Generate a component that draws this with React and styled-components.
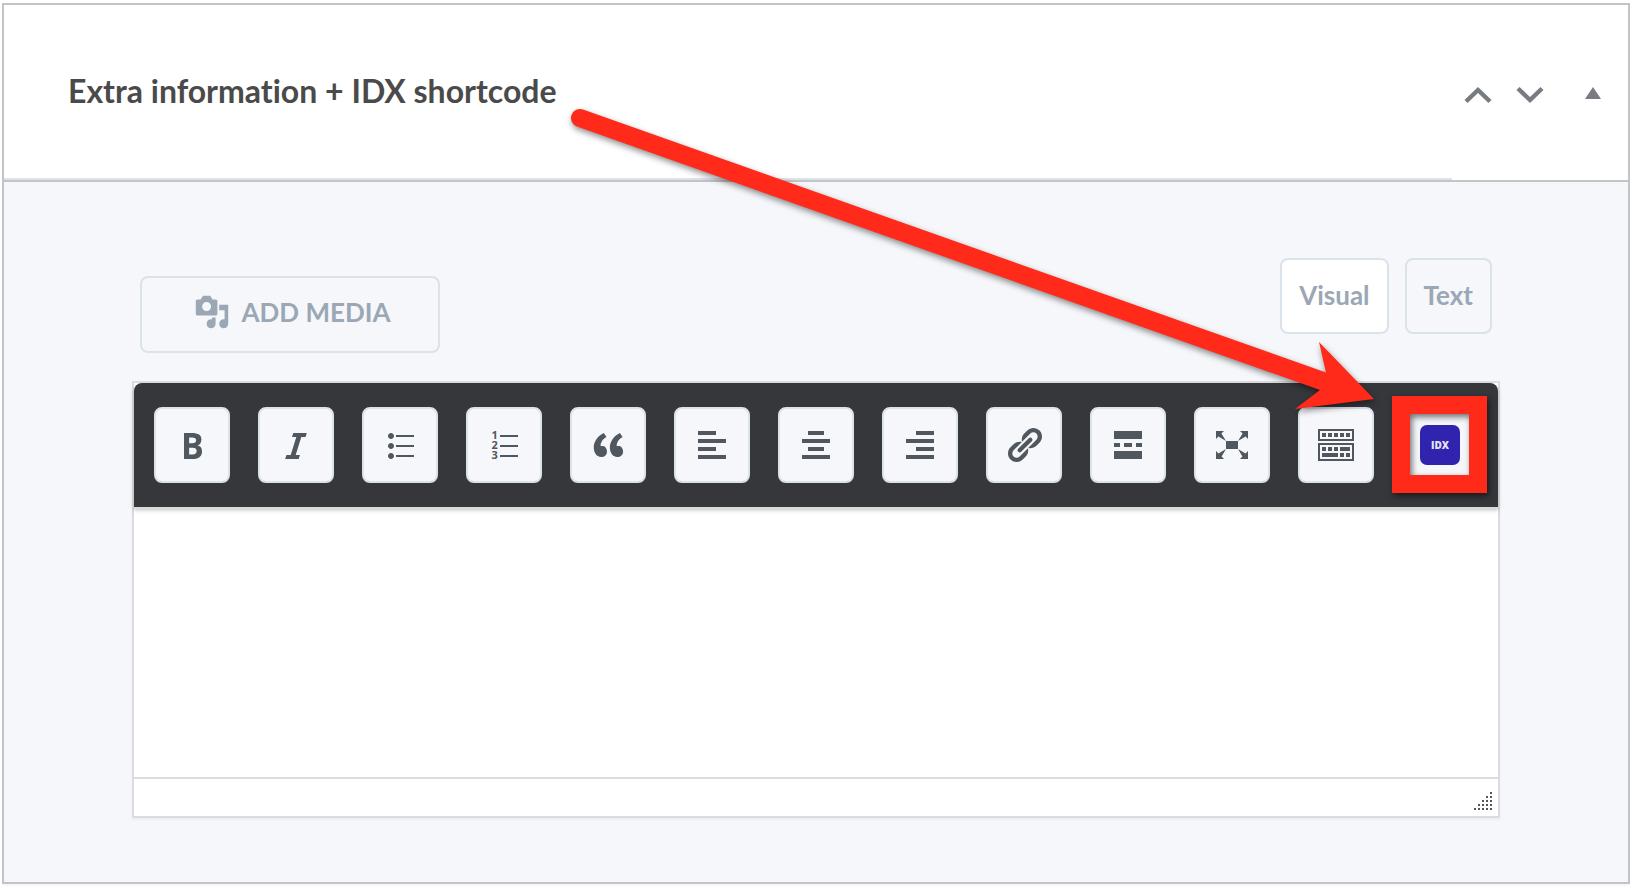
import React from "react";
import styled, { createGlobalStyle } from "styled-components";

const GlobalStyle = createGlobalStyle`
  * { box-sizing: border-box; }
  body {
    margin: 0;
    background: #fff;
    font-family: Lato, "Liberation Sans", sans-serif;
    font-variant-ligatures: none;
  }
  button, textarea { font: inherit; margin: 0; }
`;

const Page = styled.main`
  padding: 3px 2px 4px;
`;

const Panel = styled.section`
  position: relative;
  border: 2px solid #c3c4c7;
  background: #f5f7fb;
  box-shadow: 0 2px 2px rgba(0, 0, 0, 0.04);
`;

const Header = styled.header`
  display: flex;
  height: 177px;
  background: #fff;
  border-bottom: 2px solid #c3c4c7;
`;

const Title = styled.h2`
  flex: 1;
  margin: 0;
  padding: 66px 64px 0;
  border-bottom: 2px solid #dae2ea;
  font-size: 32px;
  line-height: 40px;
  font-weight: 700;
  color: #4a4a4a;
`;

const HeaderButton = styled.button`
  display: flex;
  align-items: center;
  justify-content: center;
  width: ${(p) => (p.$wide ? 72 : 52)}px;
  padding: 0;
  border: 0;
  background: none;
  color: #787c82;
`;

const Body = styled.div`
  padding: 76px 128px 64px;
`;

const Controls = styled.div`
  display: flex;
  justify-content: space-between;
  align-items: flex-start;
  padding: 0 8px;
  margin-bottom: 28px;
`;

const OutlineButton = styled.button`
  display: flex;
  align-items: center;
  justify-content: center;
  height: 76px;
  padding: 0 17px 2px;
  border: 2px solid #dae2ea;
  border-radius: 8px;
  background: ${(p) => (p.$active ? "#fff" : "#f5f7fb")};
  color: #9ba7b4;
  font-size: 26px;
  line-height: 32px;
  font-weight: 700;
`;

const MediaButton = styled(OutlineButton)`
  width: 300px;
  height: 77px;
  margin-top: 18px;
  padding: 0 16px 6px 20px;
  gap: 12px;
  text-transform: uppercase;
`;

const Tabs = styled.div`
  display: flex;
  gap: 16px;
`;

const Editor = styled.div`
  border: 2px solid #dcdcde;
  background: #fff;
  box-shadow: 0 2px 2px rgba(0, 0, 0, 0.04);
`;

const Toolbar = styled.div`
  position: relative;
  display: flex;
  flex-wrap: wrap;
  gap: 28px;
  padding: 24px 20px;
  border-radius: 8px 8px 0 0;
  background: #36373b;
  box-shadow: 0 2px 0 #d9d9d9, 0 3px 4px rgba(0, 0, 0, 0.25);
`;

const Tool = styled.button`
  position: relative;
  display: flex;
  align-items: center;
  justify-content: center;
  width: 76px;
  height: 76px;
  padding: 0;
  border: 2px solid #dae2ea;
  border-radius: 8px;
  background: #f5f7fb;
  color: #50575e;
`;

const IdxMark = styled.span`
  display: flex;
  align-items: center;
  justify-content: center;
  width: 40px;
  height: 40px;
  border-radius: 7px;
  background: #3023ae;
  color: #e4e2f5;
  font-family: "Open Sans", sans-serif;
  font-size: 10px;
  line-height: 12px;
  font-weight: 800;
`;

const Highlight = styled.span`
  position: absolute;
  top: -13px;
  left: -12px;
  width: 95px;
  height: 97px;
  border: 18px solid #ff2a1a;
  filter: drop-shadow(2px 3px 3px rgba(0, 0, 0, 0.55));
  pointer-events: none;
`;

const Content = styled.textarea`
  display: block;
  width: 100%;
  height: 270px;
  padding: 20px;
  border: 0;
  outline: 0;
  resize: none;
  background: transparent;
  font-size: 26px;
`;

const StatusBar = styled.div`
  display: flex;
  justify-content: flex-end;
  align-items: flex-end;
  height: 39px;
  padding: 0 6px 6px;
  border-top: 2px solid #dcdcde;
`;

const Arrow = styled.svg`
  position: absolute;
  top: 100px;
  right: 244px;
  pointer-events: none;
  overflow: visible;
  filter: drop-shadow(1px 3px 3px rgba(0, 0, 0, 0.45));
`;

const Icon = ({ d, size = 40, children }) => (
  <svg width={size} height={size} viewBox="0 0 20 20" fill="currentColor" aria-hidden="true">
    {d ? <path d={d} /> : children}
  </svg>
);

const mediaPath =
  "M13 11V4c0-.55-.45-1-1-1h-1.67L9 1H5L3.67 3H2c-.55 0-1 .45-1 1v7c0 .55.45 1 1 1h10c.55 0 1-.45 1-1zM7 4.5c1.38 0 2.5 1.12 2.5 2.5S8.38 9.5 7 9.5 4.5 8.38 4.5 7 5.62 4.5 7 4.5zM14 6h5v10.5c0 1.38-1.12 2.5-2.5 2.5S14 17.88 14 16.5s1.12-2.5 2.5-2.5c.17 0 .34.02.5.05V9h-3V6zm-4 8.05V13h2v3.5c0 1.38-1.12 2.5-2.5 2.5S7 17.88 7 16.5 8.12 14 9.5 14c.17 0 .34.02.5.05z";

const tools = [
  {
    label: "Bold",
    d: "M6 4v13h4.54c1.37 0 2.46-.33 3.26-1 .8-.66 1.2-1.58 1.2-2.77 0-.84-.17-1.51-.51-2.01s-.9-.85-1.67-1.03v-.09c.57-.1 1.02-.4 1.36-.9s.51-1.13.51-1.91c0-1.14-.39-1.98-1.17-2.5C12.75 4.26 11.5 4 9.78 4H6zm2.57 5.15V6.26h1.36c.73 0 1.27.11 1.61.32.34.22.51.58.51 1.07 0 .54-.16.92-.47 1.15s-.82.35-1.51.35h-1.5zm0 2.19h1.6c1.44 0 2.16.53 2.16 1.61 0 .6-.17 1.05-.51 1.34s-.86.43-1.57.43H8.57v-3.38z",
  },
  { label: "Italic", d: "M14.78 6h-2.13l-2.8 9h2.12l-.62 2H4.6l.62-2h2.14l2.8-9H8.03l.62-2h6.75z" },
  {
    label: "Bulleted list",
    d: "M5.5 7C4.67 7 4 6.33 4 5.5 4 4.68 4.67 4 5.5 4 6.32 4 7 4.68 7 5.5 7 6.33 6.32 7 5.5 7zM8 5h9v1H8V5zm-2.5 7c-.83 0-1.5-.67-1.5-1.5C4 9.68 4.67 9 5.5 9c.82 0 1.5.68 1.5 1.5 0 .83-.68 1.5-1.5 1.5zM8 10h9v1H8v-1zm-2.5 7c-.83 0-1.5-.67-1.5-1.5 0-.82.67-1.5 1.5-1.5.82 0 1.5.68 1.5 1.5 0 .83-.68 1.5-1.5 1.5zM8 15h9v1H8v-1z",
  },
  {
    label: "Numbered list",
    art: (
      <>
        <path d="M8 5h9v1H8zM8 10h9v1H8zM8 15h9v1H8z" />
        <g fontFamily="Open Sans, sans-serif" fontSize="5.5" fontWeight="700">
          <text x="3.8" y="7">1</text>
          <text x="3.8" y="12">2</text>
          <text x="3.8" y="17">3</text>
        </g>
      </>
    ),
  },
  {
    label: "Blockquote",
    d: "M9.49 13.22c0-.74-.2-1.38-.61-1.9-.62-.78-1.83-.88-2.53-.72-.29-1.65 1.11-3.75 2.92-4.65L7.88 4c-2.73 1.3-5.42 4.28-4.96 8.05C3.21 14.43 4.59 16 6.54 16c.85 0 1.56-.25 2.12-.75s.83-1.18.83-2.03zm8.05 0c0-.74-.2-1.38-.61-1.9-.63-.78-1.83-.88-2.53-.72-.29-1.65 1.11-3.75 2.92-4.65L15.93 4c-2.73 1.3-5.41 4.28-4.95 8.05.28 2.38 1.66 3.95 3.61 3.95.85 0 1.56-.25 2.12-.75s.83-1.18.83-2.03z",
  },
  { label: "Align left", d: "M3 3h9v2H3zM3 7h14v2H3zM3 11h9v2H3zM3 15h14v2H3z" },
  { label: "Align center", d: "M6 3h8v2H6zM3 7h14v2H3zM6 11h8v2H6zM3 15h14v2H3z" },
  { label: "Align right", d: "M8 3h9v2H8zM3 7h14v2H3zM8 11h9v2H8zM3 15h14v2H3z" },
  {
    label: "Insert link",
    d: "M17.74 2.76c1.68 1.69 1.68 4.41 0 6.1l-1.53 1.52c-1.12 1.12-2.7 1.47-4.14 1.09l2.62-2.61.76-.77.76-.76c.84-.84.84-2.2 0-3.04-.84-.85-2.2-.85-3.04 0l-.77.76-3.38 3.38c-.37-1.44-.02-3.02 1.1-4.14l1.52-1.53c1.69-1.68 4.42-1.68 6.1 0zM8.59 13.43l5.34-5.34c.42-.42.42-1.1 0-1.52-.44-.43-1.13-.39-1.53 0l-5.33 5.34c-.42.42-.42 1.1 0 1.52.44.43 1.13.39 1.52 0zm-.76 2.29l4.14-4.15c.38 1.44.03 3.02-1.09 4.14l-1.52 1.53c-1.69 1.68-4.41 1.68-6.1 0-1.68-1.68-1.68-4.42 0-6.1l1.53-1.52c1.12-1.12 2.7-1.47 4.14-1.1l-4.14 4.15c-.85.84-.85 2.2 0 3.05.84.84 2.2.84 3.04 0z",
  },
  { label: "Read more", d: "M3 3h14v4H3zM3 9h3v2H3zM8 9h4v2H8zM14 9h3v2h-3zM3 13h14v4H3z" },
  {
    label: "Fullscreen",
    d: "M7 8h6v4H7zm-5 5v4h4l-1.2-1.2L7 12l-3.8 2.2M14 17h4v-4l-1.2 1.2L13 12l2.2 3.8M14 3l1.3 1.3L13 8l3.8-2.2L18 7V3M6 3H2v4l1.2-1.2L7 8 4.7 4.3",
  },
  {
    label: "Toolbar toggle",
    art: (
      <path
        fillRule="evenodd"
        d="M1 2h18v6H1zM2 3v4h16V3zM3 4h2v2H3zM6 4h2v2H6zM9 4h2v2H9zM12 4h2v2h-2zM15 4h2v2h-2zM1 9h18v9H1zM2 10v7h16v-7zM3 11h2v2H3zM6 11h2v2H6zM9 11h2v2H9zM12 11h5v2h-5zM3 14h8v2H3zM12 14h2v2h-2zM15 14h2v2h-2z"
      />
    ),
  },
];

const gripDots = [0, 1, 2, 3, 4].flatMap((row) =>
  [0, 1, 2, 3, 4].filter((col) => col >= 4 - row).map((col) => [col * 4, row * 4])
);

export default function App() {
  return (
    <>
      <GlobalStyle />
      <Page>
        <Panel>
          <Header>
            <Title>Extra information + IDX shortcode</Title>
            <HeaderButton type="button" aria-label="Move up">
              <svg width="40" height="40" viewBox="0 0 40 40" fill="none" stroke="currentColor" strokeWidth="4.500">
                <path d="M8 28.500 20 17 32 28.500" />
              </svg>
            </HeaderButton>
            <HeaderButton type="button" aria-label="Move down">
              <svg width="40" height="40" viewBox="0 0 40 40" fill="none" stroke="currentColor" strokeWidth="4.500">
                <path d="M8 15.500 20 27 32 15.500" />
              </svg>
            </HeaderButton>
            <HeaderButton type="button" aria-label="Toggle panel" $wide>
              <svg width="40" height="40" viewBox="0 0 40 40" fill="currentColor">
                <path d="M21 14 29 26H13z" />
              </svg>
            </HeaderButton>
          </Header>
          <Body>
            <Controls>
              <MediaButton type="button">
                <Icon d={mediaPath} size={36} />
                Add Media
              </MediaButton>
              <Tabs>
                <OutlineButton type="button" $active>Visual</OutlineButton>
                <OutlineButton type="button">Text</OutlineButton>
              </Tabs>
            </Controls>
            <Editor>
              <Toolbar role="toolbar" aria-label="Formatting">
                {tools.map((t) => (
                  <Tool key={t.label} type="button" aria-label={t.label}>
                    <Icon d={t.d}>{t.art}</Icon>
                  </Tool>
                ))}
                <Tool type="button">
                  <IdxMark>IDX</IdxMark>
                  <Highlight />
                </Tool>
              </Toolbar>
              <Content aria-label="Extra information" />
              <StatusBar>
                <svg width="18" height="18" viewBox="0 0 18 18" fill="#555" aria-hidden="true">
                  {gripDots.map(([x, y]) => (
                    <rect key={`${x}-${y}`} x={x} y={y} width="2" height="2" />
                  ))}
                </svg>
              </StatusBar>
            </Editor>
          </Body>
          <Arrow width="814" height="310" viewBox="570 105 814 310" aria-hidden="true">
            <path
              fill="#ff2a1a"
              d="M583 109.500 1326 372.500 1319 342 1374 399 1295 409 1320 390 577 126.500A9 9 0 0 1 583 109.500z"
            />
          </Arrow>
        </Panel>
      </Page>
    </>
  );
}
